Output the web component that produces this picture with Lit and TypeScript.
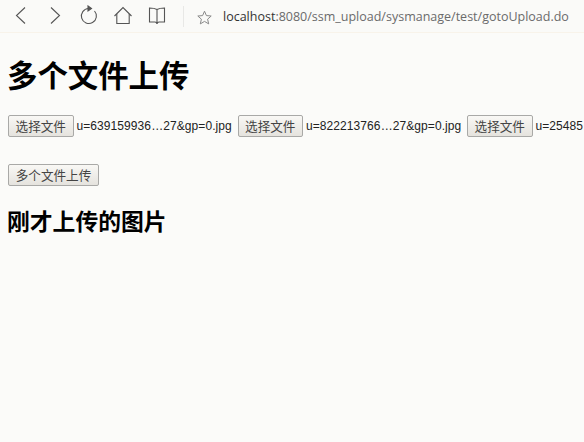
import { LitElement, html, css, svg } from "lit";
import { customElement } from "lit/decorators.js";

const files = ["u=639159936…27&gp=0.jpg", "u=822213766…27&gp=0.jpg", "u=25485"];

@customElement("app-root")
export class AppRoot extends LitElement {
  static styles = css`
    :host { display: block; width: 584px; height: 442px; overflow: hidden; background: #fbfbf9;
      font-family: "Liberation Sans", "Noto Sans CJK SC", Arial, sans-serif; color: #000; }
    .bar { display: flex; align-items: center; height: 33px; box-sizing: border-box; border-bottom: 1px solid #f8f3ea; background: #fafaf8; }
    .ic { display: block; flex: none; }
    .nav { display: flex; align-items: center; padding-left: 4px; }
    .sep { width: 1px; height: 21px; background: #e8e8e6; margin-left: 9px; }
    .star { margin-left: 13px; margin-top: 2px; }
    .url { margin-left: 11px; font: 12.5px "Open Sans", sans-serif; color: #6b6b6b; white-space: nowrap; }
    .url b { font-weight: 400; color: #333; }
    main { padding: 0 8px; }
    h1 { font-size: 30.4px; line-height: 37px; font-weight: 700; margin: 25px 0 0 -1px; }
    .row { display: flex; align-items: center; gap: 3px; margin-top: 20px; height: 22px; white-space: nowrap; font-size: 12px; letter-spacing: 0.08px; color: #222; }
    .name { width: 158px; flex: none; }
    button { flex: none; height: 22px; padding: 0 0 2px; box-sizing: border-box; font: 12.6px "Noto Sans CJK SC", sans-serif; color: #444;
      border: 1px solid #a9a9a7; border-radius: 2px; background: linear-gradient(#f9f8f5, #e5e3de); }
    .pick { width: 65.500px; }
    .send { display: block; width: 91px; margin-top: 27px; }
    h2 { font-size: 22.8px; line-height: 28px; font-weight: 700; margin: 22px 0 0 -1px; }
  `;

  private icon(body: unknown) {
    return html`<svg class="ic" width="34" height="22" viewBox="0 0 34 22" fill="none" stroke="#555" stroke-width="1.1">${body}</svg>`;
  }

  render() {
    return html`
      <div class="bar">
        <div class="nav">
          ${this.icon(svg`<path d="M21 2.500 12.500 10.500 21 18.500"/>`)}
          ${this.icon(svg`<path d="M13 2.500 21.500 10.500 13 18.500"/>`)}
          ${this.icon(svg`<path d="M22.500 6A7.500 7.500 0 1 1 16.500 3.500"/><path d="M16 1 19.500 3.500 16 6z" fill="#555"/>`)}
          ${this.icon(svg`<path d="M8.500 11 17 2.500 25.500 11"/><path d="M10.800 9V18.500H23.200V9"/>`)}
          ${this.icon(svg`<path d="M17 4.500C15 3.300 12.500 3 9.500 3V17H15C16 17 16.700 17.500 17 19 17.300 17.500 18 17 19 17H24.500V3C21.500 3 19 3.300 17 4.500ZM17 4.500V19"/>`)}
        </div>
        <div class="sep"></div>
        <svg class="ic star" width="15" height="15" viewBox="0 0 15 15" fill="none" stroke="#8a8a8a" stroke-width="1">
          <path d="M7.500 1.200 9.400 5.600 14.200 6 10.600 9.200 11.700 13.900 7.500 11.400 3.300 13.900 4.400 9.200 .8 6 5.600 5.600z"/>
        </svg>
        <div class="url"><b>localhost</b>:8080/ssm_upload/sysmanage/test/gotoUpload.do</div>
      </div>
      <main>
        <h1>多个文件上传</h1>
        <div class="row">
          ${files.map((f) => html`<button class="pick">选择文件</button><span class="name">${f}</span>`)}
        </div>
        <button class="send">多个文件上传</button>
        <h2>刚才上传的图片</h2>
      </main>
    `;
  }
}
